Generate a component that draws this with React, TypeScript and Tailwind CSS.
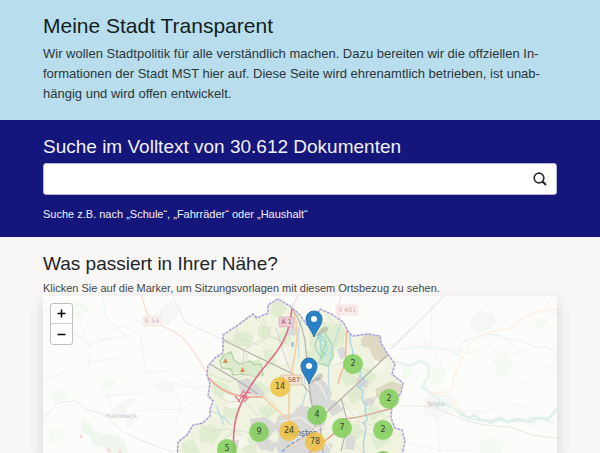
import React from "react";

type Cluster = { x: number; y: number; count: number };
type Pin = { x: number; y: number; label: string };

// Marker places are pixels from the top centre of the map.
const clusters: Cluster[] = [
  { x: 53, y: 68, count: 2 },
  { x: 89, y: 103, count: 2 },
  { x: 83, y: 134, count: 2 },
  { x: 17, y: 119, count: 4 },
  { x: 42, y: 132, count: 7 },
  { x: -41, y: 136, count: 9 },
  { x: -73, y: 153, count: 5 },
  { x: -20, y: 91, count: 14 },
  { x: -11, y: 135, count: 24 },
  { x: 15, y: 146, count: 78 },
];

const pins: Pin[] = [
  { x: 14, y: 41, label: "Sitzungsvorlage im Norden" },
  { x: 9, y: 88, label: "Sitzungsvorlage in der Mitte" },
];

const cityOutline =
  "M177 460 L178 442 L187 435 L193 425 L203 423 L210 416 L210 409 L213 401 L208 396 L210 384 L207 375 L208 366 L215 358 L223 353 L223 335 L238 325 L253 314 L257 318 L268 313 L268 305 L278 299 L290 306 L300 315 L307 325 L314 322 L320 309 L333 315 L343 322 L349 333 L353 336 L368 334 L380 336 L381 343 L387 353 L395 364 L392 374 L403 383 L401 393 L392 405 L391 418 L395 428 L402 430 L405 441 L401 460 Z";

function Plate({ x, y, w, text, fill, ink }: { x: number; y: number; w: number; text: string; fill: string; ink: string }) {
  return (
    <g>
      <rect x={x} y={y} width={w} height="10" rx="1.5" fill={fill} stroke={ink} strokeOpacity=".3" strokeWidth=".7" />
      <text x={x + w / 2} y={y + 7.4} textAnchor="middle" fontSize="6.5" fill={ink}>
        {text}
      </text>
    </g>
  );
}

function CityMap() {
  return (
    <svg
      className="absolute inset-0 h-full w-full font-['DejaVu_Sans',sans-serif] not-italic"
      viewBox="43 296 514 157"
      preserveAspectRatio="xMidYMin slice"
      aria-hidden="true"
    >
      <defs>
        <clipPath id="city">
          <path d={cityOutline} />
        </clipPath>
      </defs>
      <rect x="-400" y="296" width="1400" height="900" fill="#fcfdfa" />

      {/* surroundings */}
      <g fill="#f5faf2">
        <path d="M62 303l20-3 8 10-13 9-17-5zM105 380l9-3 2 8-9 5-6-4zM50 393l12-3 8 7-11 5-10-2zM68 310l8 3-4 8-10-4zM492 358l15-6 6 10-5 15-10 1zM430 370l12-4 4 11-8 10-10-3zM480 440l14-4 10 8-3 12-22 2zM403 366l10 2-2 12-10-3zM535 317l12 4-3 8-10-3zM50 430l10-2 4 9-9 8-7-4z" />
        <path d="M82 420l8 3 3 7 10 4 14 1 8 7 4 12-16 2-9-8-11-3-4-9-8-4z" fill="#eef6ed" />
      </g>
      <g fill="#f6f6f6">
        <path d="M158 310l13-9 11 5-4 10-10 9-9-3-8-6zM116 406l14-8 7 2-12 11-2 6-12-1zM472 318l8-8 13 3 4 9-6 7-14 3-7-6zM425 397l13-3 14 1 2 9-9 10-7 7-15-8zM160 383l12-1 3 7-9 4-9-3zM125 420l9-3-1 11-7-2zM424 341l9 2-2 9-8-3zM532 416l6 1-1 10-6-2z" />
      </g>
      <g fill="none" stroke="#f4f3f4" strokeWidth="1">
        <path d="M43 381l47-19 35-5 23-17M89 369l1-21-12-33-34-7M90 369l18 28 8 21M105 396l35-3 25-12 45 12M43 302l38 13 22 25 20-3M135 410l48-1 25-18M170 382l12 25-8 21M106 296l19 22 31 9M405 345l30 2 35 6 16-7 21 10 22-7M432 296l-1 45 14 35M520 383l12-3 13-14 12-3M440 410l45 2 28-8 17 3M493 330l26 20 15 10 23 12M485 300l7 20M437 415l3 40M406 443l38 8 28-1" />
      </g>
      <g fill="none">
        <path d="M43 417c10-3 10-15 20-15l12-1c10 3 5 8 17 10s16 7 24 15 20 13 57 26" stroke="#eae9ea" />
        <path d="M173 296l12 26 40 19" stroke="#e8e8e8" />
        <path d="M142 296c5 25 12 26 29 34s24 24 39 48" stroke="#fbdcd6" strokeWidth="1.3" />
        <path d="M102 296c4 14 1 18 9 27s14 6 16 19M400 349c23-3 31-3 46 1 10 1 10 6 13 5 3-19 12-17 25-18 8-9 19 5 35 3l18 8 9-2 11 8" stroke="#e9f3f5" strokeWidth="1.1" />
        <path d="M395 362l16 4 9-5 9 4-1 12-6 10 8 6 12 9 13 7 9 8" stroke="#e8f4ed" strokeWidth="3" />
        <path d="M460 412l8 6 6-3 6 5 12 1 8-3 8 4 10-3 10 3 9-4 11 1 8-9 6 5 5-1 4 8" stroke="#e1f1e8" strokeWidth="3" />
        <path d="M461 412l8 7 12 1 10 3 10-3 17 2 12-4 12 1 12 4" stroke="#dbeeee" strokeWidth="1.2" />
        <path d="M430 393c19-2 23 4 23-13 7-15 3-17 15-29 2-14 16-17 28-21l12-1c14-8 17-18 49-20M452 396l10 17" stroke="#fcf0e3" strokeWidth="1.3" />
        <path d="M401 406c24 0 30-1 42 5 21 9 30 14 67 16 17 5 21 10 47 11" stroke="#f0e6e3" strokeWidth="1.1" />
        <path d="M391 349l53-53" stroke="#e5e5e1" strokeWidth="1.1" />
        <path d="M43 345l18-14 20 6 8 8 17-6 7-9 12-5 16 12 5 37 24-4 24 18 35-5M543 296l7 8-2 8 9 4" stroke="#f1e8f3" strokeWidth="1" strokeDasharray="4 2" />
      </g>
      <path d="M79 438l2-4 2 4zM107 452l2-4 2 4zM118 453l2-4 2 4z" fill="#f8d7cb" />
      <text x="106" y="418" fontSize="6" fill="#c2c2c2">Havixbeck</text>
      <text x="427" y="406" fontSize="6" fill="#c2c2c2">Telgte</text>
      <Plate x={143} y={316} w={18} text="B 54" fill="#fcf1ee" ink="#d6bdbb" />
      <Plate x={336} y={305} w={22} text="B 481" fill="#fceeec" ink="#d3b3b2" />
      <path d="M341 323l-3-16 3-11" stroke="#fae4e4" strokeWidth="1.500" fill="none" />

      {/* city area */}
      <path d={cityOutline} fill="#f0f3df" />
      <g clipPath="url(#city)">
        <g fill="#e1edd0">
          <path d="M272 303l9-2 7 8-9 9-9-5zM233 335l13-4 10 7-7 9-15-2zM259 325l13 2-4 13-11-3zM213 380l14 4 7 11-13 2-9-7zM247 388l12-7 12 9-14 9zM264 351l9-2 3 14-10 6zM278 333l10-5 3 12-11 7zM224 407l10-4 7 10-8 7-10-3zM258 408l12-4 8 8-14 8zM199 429l12-5 11 7-9 13-13-3zM246 437l12 4-3 15-13-5zM182 443l10-4 8 13-16 8zM354 373l16-5 8 9-14 9zM338 374l14-6 6 14-12 5zM347 391l14-6 4 12-13 8zM345 426l12-3 8 10-12 10zM364 409l12-4 8 9-12 7zM370 436l13-5 8 10-14 9zM327 331l12-9 8 10-4 13-13 4zM310 329l10-9 13 6-4 23-13 9-7-13zM304 352l14-3 8 12-16 8z" />
          <path d="M220 361l4-6 7-3 4 9 5 4 10-3 10-3 3 15-9 1-12-2-10-1-7-6z" fill="#dcebcb" />
          <path d="M317 335l8-4 7 13 1 12-6 10-9-3 2-16z" fill="#d3ead2" />
        </g>
        <g fill="#f7f6eb">
          <path d="M238 348l15 2 4 9-14 4zM223 394l18 2 2 10-14 3zM254 335l9 3-2 12-10-2zM276 353l10-5 3 13-9 5zM345 409l13 3-4 9-12-2zM376 357l10 5-3 12-12-2zM229 440l16-6 4 10-12 6zM330 357l12-6 5 9-12 8z" />
        </g>
        <path d="M361 339l7-6 12 2 3 12 4 8-6 7-7-3-5-11-8-2zM376 389l15-8 12 4-6 14-12-3-9 2z" fill="#dddac1" />
        <g fill="#d9d9d8">
          <path d="M288 328l7 2-1 6-6-1zM309 382l10-5 7 6 6 10-4 15-14 4-5-13zM292 414l8-9 13 3 10-4 3 15-5 16 11 13-7 13-40 3-9-16 3-12-5-9 5-12zM237 381l11-3 14 12 3 6-12-1-12-2zM250 419l15-2 13 9-9 12 4 10-13 1-8-13zM258 437l21 6-7 9-12-3zM364 399l12-2-3 9-10-1zM321 399l15 2 8 9-12 6zM337 350l6-4 4 10-6 4zM346 437l10-1-2 14-9-1zM291 325l7 3-1 8-7-2zM357 378l12 2-2 8-11-2zM383 427l11 1-4 6-9-2zM230 443l9-4-1 9-8 2zM318 442l15 2-4 9-14-2z" />
        </g>
        <g fill="none">
          <path d="M220 361l4-6 7-3 3 8 6 4 10-3 5 4 6-1 2 11-9 1-12-2-9 1-2-6-9-1z" stroke="#b5d6a5" strokeWidth="1.500" />
          <path d="M315 344l4-9 6 3 2 11-5 9-6-8zM317 337l9 5M320 334l1 17 6 4" stroke="#a5d8d2" strokeWidth="1.3" />
          <path d="M325 333l7 11 1 12-5 10-10-3M326 341l-6 20" stroke="#addaae" strokeWidth="1.7" />
          <path d="M223 339l14 4 10 12-1 14 12 19 16 15-9 18M253 316l11 10-2 13-20 12M236 326l3 12 19 7 10-10 21 9M209 374l20 8 15-7 19 1M211 391l17 11 16-1 14 15M199 424l12 7 17-2 16 8M348 397l15-5 11-13M355 421l17 4 17-9M334 366l15-7 20 13M342 438l21-7 21 10M343 449l12-4 10 10M327 315l12 16-5 18M344 403l10 13-9 12M219 443l17-13 19 4M263 319l8 18 17 7" stroke="#dddfcb" strokeWidth="1" />
          <path d="M302 318c-6 16-3 28-3 40M303 366l3 26-4 14M341 324c-11 26-14 40-12 62l-7 18M206 409c12 4 18 7 25 16M216 405l8 20" stroke="#bddce2" strokeWidth="1.2" />
          <path d="M351 334c-5 8 6 16 0 25 12-1 9 13 9 18 8 2 4 8-2 10 12 5-3 11 9 18-7 6 6 14-4 18 8 7-4 17 2 32" stroke="#b0d7e4" strokeWidth="1.5" />
          <path d="M223 340l70 34 18 20M208 363l29 17 21 14M292 308c8 12 13 25 14 42l3 35 3 20 8 18 3 30M394 349l-54 51-22 20-12 23M341 398l7 26-7 27" stroke="#b3afac" strokeWidth="1.1" />
          <path d="M276 328c4 14 9 29 15 45M244 349l-1 18" stroke="#d3cfd8" />
          <path d="M338 459l-22-30-16-12-21 5M288 422l-17 22M302 372l18 13 7 14M293 441l27-14 19-5" stroke="#f4efe9" strokeWidth="1.2" />
          <path d="M292 309c11 25 1 45 0 65l-3 19v28l-5 17M263 397l27 24M285 449l22-14" stroke="#f6d0a3" strokeWidth="1.6" />
          <path d="M342 419c24-1 38-10 65-13" stroke="#d4ab9b" strokeWidth="1.3" />
          <path d="M347 328c-1 17-2 27-1 32-2 9-7 15-8 24" stroke="#f3b898" strokeWidth="1.4" />
          <path d="M343 419c-4 16-20 21-39 38" stroke="#f0a18b" strokeWidth="1.6" />
          <path d="M208 377c9 11 21 18 38 20h17" stroke="#f1a38f" strokeWidth="1.6" />
          <path d="M292 307c-3 47-30 53-47 89-13 22-12 42-11 60" stroke="#df6e87" strokeWidth="1.600" />
          <path d="M240 396l4-6M244 402l5-5M240 402l-5-6M243 392l8 1M238 402l5-7" stroke="#e27690" strokeWidth="1.2" />
          <circle cx="244.500" cy="396.500" r="2.500" fill="#e27690" />
          <path d="M278 456l10-10 21-13" stroke="#87aae0" strokeWidth="1.5" strokeDasharray="4 2" />
        </g>
        <path d="M291 342h3v5h-3z" fill="#9fcde4" />
        <path d="M223 363l2.500-5 2.500 5zM240 372l2.500-5 2.500 5z" fill="#dd8a58" />
      </g>
      <path d={cityOutline} fill="none" stroke="#d6c9e4" strokeWidth="1.8" strokeOpacity=".6" />
      <path d={cityOutline} fill="none" stroke="#9a94d4" strokeWidth="1.1" strokeDasharray="2.500 1.500" />
      <path d="M292 307l6-11" stroke="#f8d3da" strokeWidth="1.200" />
      <Plate x={279} y={317} w={15} text="A 1" fill="#edccd5" ink="#8f4a61" />
      <Plate x={280} y={375} w={22} text="L 587" fill="#f6e1cd" ink="#735947" />
      <text x="284" y="436" fontSize="8" fill="#5c5c5c">Münster</text>
      <circle cx="383" cy="461" r="10" fill="#83cd58" fillOpacity=".88" />
    </svg>
  );
}

function PinIcon() {
  return (
    <svg width="28" height="29" viewBox="0 0 28 29" aria-hidden="true">
      <path d="M9 27L17 18q5-3 6 0t-4 5z" fill="#333" opacity=".2" />
      <path d="M9 27C7.500 21.500 1 15.500 1 9a8 8 0 0 1 16 0c0 6.500-6.500 12.500-8 18z" fill="#2a81c7" stroke="#2c74ad" />
      <circle cx="9" cy="9" r="3" fill="#fff" />
    </svg>
  );
}

export default function App() {
  return (
    <div lang="de" className="flex min-h-screen flex-col bg-[#f8f7f5] font-['Liberation_Sans',Arial,sans-serif] text-[#212529]">
      <header className="bg-[#b8ddec] px-[43px] pt-3 pb-4">
        <h1 className="text-[21px] leading-7 text-[#111d22]">Meine Stadt Transparent</h1>
        <p className="mt-1 text-[13px] leading-5 text-[#2b363b]">
          Wir wollen Stadtpolitik für alle verständlich machen. Dazu bereiten wir die offziellen In&shy;formationen der
          Stadt MST hier auf. Diese Seite wird ehrenamtlich betrieben, ist unab&shy;hängig und wird offen entwickelt.
        </p>
      </header>

      <section className="bg-[#15167c] px-[43px] pt-[15px] pb-4 text-[#f1f1f7]">
        <form role="search" onSubmit={(event) => event.preventDefault()}>
          <label htmlFor="query" className="block text-[19px] leading-6">
            Suche im Volltext von 30.612 Dokumenten
          </label>
          <div className="mt-1 flex h-8 rounded-[3px] border border-[#b5b5d0] bg-white text-[#292b2e]">
            <input id="query" type="text" className="min-w-0 flex-1 rounded-[3px] bg-transparent px-2 text-[13px] outline-none" />
            <button type="submit" aria-label="Suchen" className="flex w-8 items-center justify-center">
              <svg width="14" height="14" viewBox="0 0 14 14" fill="none" stroke="currentColor" aria-hidden="true">
                <circle cx="6" cy="6" r="4.800" strokeWidth="1.700" />
                <path d="M9.400 9.400L13 13" strokeWidth="2.200" />
              </svg>
            </button>
          </div>
        </form>
        <p className="mt-3 text-[11px] leading-[14px]">Suche z.B. nach „Schule“, „Fahrräder“ oder „Haushalt“</p>
      </section>

      <main className="flex flex-1 flex-col px-[43px] pt-[15px]">
        <h2 className="text-[19px] leading-6 text-[#212529]">Was passiert in Ihrer Nähe?</h2>
        <p className="mt-1 text-[11px] leading-4 text-[#44474a]">
          Klicken Sie auf die Marker, um Sitzungsvorlagen mit diesem Ortsbezug zu sehen.
        </p>
        <div className="relative min-h-[157px] flex-1 shadow-[0_6px_14px_rgba(0,0,0,0.14)]">
          <div className="absolute inset-0 overflow-hidden">
            <CityMap />
            {clusters.map((cluster) => (
              <button
                key={`${cluster.x}/${cluster.y}`}
                type="button"
                className={`absolute flex size-5 -translate-x-1/2 -translate-y-1/2 items-center justify-center rounded-full font-['DejaVu_Sans',sans-serif] text-[8px] text-[#3c4030] ${
                  cluster.count > 9 ? "bg-[#efc13ad0]" : "bg-[#7fce58d8]"
                }`}
                style={{ left: `calc(50% + ${cluster.x}px)`, top: cluster.y }}
              >
                {cluster.count}
              </button>
            ))}
            {pins.map((pin) => (
              <button
                key={pin.label}
                type="button"
                aria-label={pin.label}
                className="absolute -ml-[9px] -mt-[27px]"
                style={{ left: `calc(50% + ${pin.x}px)`, top: pin.y }}
              >
                <PinIcon />
              </button>
            ))}
          </div>
          <div className="absolute top-[7px] left-[7px] flex w-[23px] flex-col overflow-hidden rounded-[3px] border border-[#bfbfbd] bg-white text-black">
            <button type="button" aria-label="Vergrößern" className="flex h-5 items-center justify-center border-b border-[#ccc]">
              <svg width="9" height="9" viewBox="0 0 9 9" stroke="currentColor" strokeWidth="1.500" aria-hidden="true">
                <path d="M.500 4.500h8M4.500.500v8" />
              </svg>
            </button>
            <button type="button" aria-label="Verkleinern" className="flex h-5 items-center justify-center">
              <svg width="9" height="9" viewBox="0 0 9 9" stroke="currentColor" strokeWidth="1.500" aria-hidden="true">
                <path d="M.500 4.500h8" />
              </svg>
            </button>
          </div>
        </div>
      </main>
    </div>
  );
}
